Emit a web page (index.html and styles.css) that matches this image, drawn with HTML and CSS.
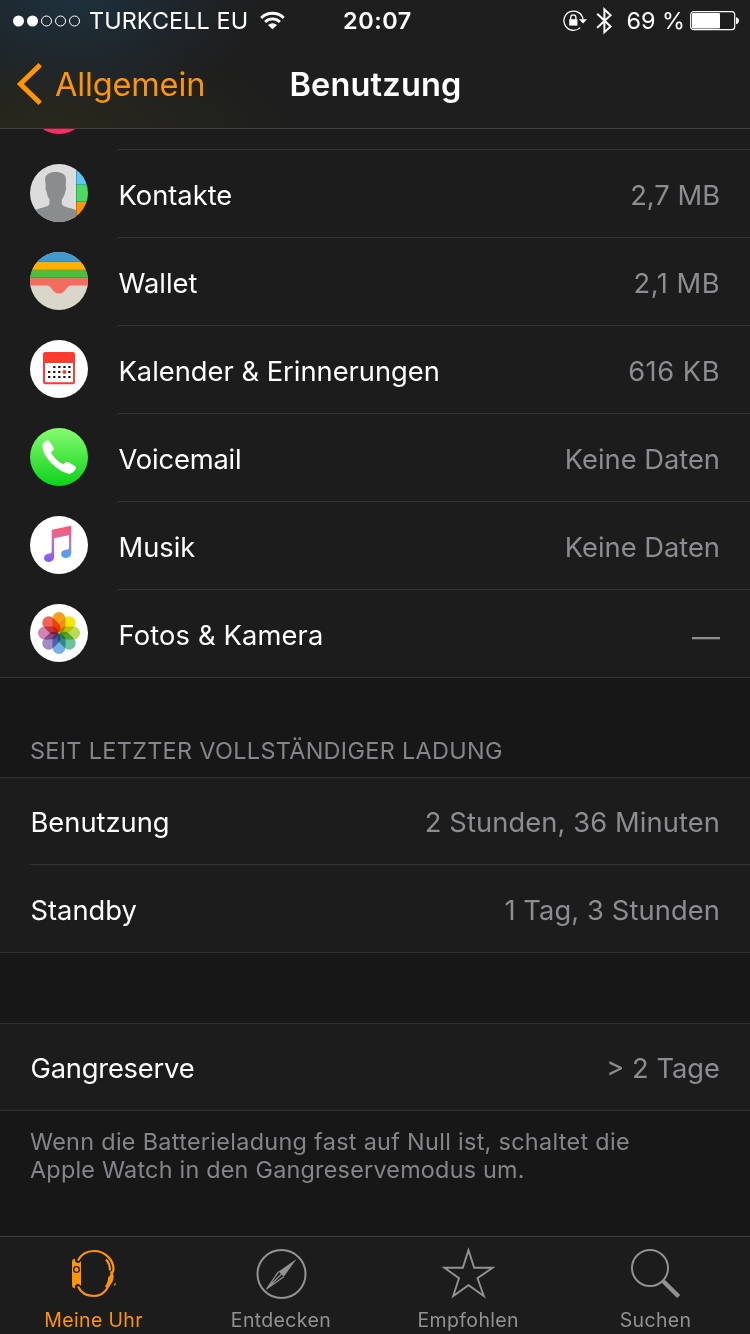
FILE: index.html
```
<!DOCTYPE html>
<html lang="de">
<head>
<meta charset="utf-8">
<title>Benutzung</title>
<link rel="stylesheet" href="styles.css">
</head>
<body>
<div class="screen">
  <header class="top">
    <div class="status">
      <div class="status-left">
        <svg class="dots" width="68" height="12" viewBox="0 0 68 12"><g fill="#fff"><circle cx="5.500" cy="6" r="5.500"/><circle cx="19.500" cy="6" r="5.500"/></g><g fill="none" stroke="#fff"><circle cx="33.500" cy="6" r="5"/><circle cx="47.500" cy="6" r="5"/><circle cx="61.500" cy="6" r="5"/></g></svg>
        <span class="carrier">TURKCELL EU</span>
        <svg class="wifi" width="25" height="19" viewBox="0 0 26 19"><g fill="none" stroke="#fff" stroke-width="3"><path d="M1.300 6.800a16.600 16.600 0 0 1 23.400 0"/><path d="M5.300 11a10.900 10.900 0 0 1 15.400 0"/></g><path d="M13 18.600l-4.700-4.300a6.700 6.700 0 0 1 9.400 0z" fill="#fff"/></svg>
      </div>
      <span class="clock">20:07</span>
      <div class="status-right">
        <svg class="lock" width="24" height="22" viewBox="0 0 24 22"><path d="M17.200 17.600A9.600 9.600 0 1 1 20 9.200" fill="none" stroke="#fff" stroke-width="1.300"/><path d="M16 9.200h8l-4 4.200z" fill="#fff"/><path d="M6.200 9.200h8.200v6.400H6.200z" fill="#fff"/><path d="M7.700 9.500V7.400a2.600 2.600 0 0 1 5.200 0v2.100" fill="none" stroke="#fff" stroke-width="1.300"/></svg>
        <svg class="bt" width="17" height="28" viewBox="0 0 17 28"><path d="M1.200 6.800L14.600 19.400 8.400 25.200V2.400l6.200 5.800L1.200 20.800" fill="none" stroke="#fff" stroke-width="2"/></svg>
        <span class="percent">69 %</span>
        <svg class="battery" width="50" height="20" viewBox="0 0 50 20"><rect x=".7" y=".7" width="44" height="18" rx="3" fill="none" stroke="#fff" stroke-width="1.200"/><rect x="2" y="2" width="28" height="15.400" rx="1.200" fill="#fff"/><path d="M46 6.300c4 .8 4 6 0 6.900z" fill="#fff"/></svg>
      </div>
    </div>
    <nav class="navbar">
      <a class="back"><svg width="28" height="44" viewBox="0 0 28 44"><path d="M24.200 2.800L4.400 22l19.800 19.200" fill="none" stroke="#ff9500" stroke-width="5"/></svg><span class="back-label">Allgemein</span></a>
      <h1 class="title">Benutzung</h1>
    </nav>
  </header>

  <main class="content">
    <section class="group apps">
      <div class="peek"><svg width="58" height="6" viewBox="0 52 58 6"><circle cx="29" cy="28" r="29" fill="#ff2968"/></svg></div>
      <div class="row">
        <svg class="icon" viewBox="0 0 58 58"><clipPath id="disc"><circle cx="29" cy="29" r="29"/></clipPath><g clip-path="url(#disc)"><path fill="#dcdcdc" d="M0 0h46v58H0z"/><path fill="#5ac8fa" d="M46 0h12v21H46z"/><path fill="#4cd964" d="M46 21h12v17H46z"/><path fill="#ff9500" d="M46 38h12v20H46z"/><path d="M46 20.500h12M46 37.500h12" stroke="#168a55" stroke-opacity=".5"/><path d="M46.500 0v58" stroke="#000" stroke-opacity=".22"/><path fill="#8a8c8e" d="M25.500 8c6 0 10.500 2 10.500 7.500l-.3 7.500c1 .2.600 2-.6 5-.3 3-1.600 5-3.300 7.500v3.500c0 3.500 5 4.200 9.200 5.300 2 .6 3.500 1.200 5 2V58H5V46.300c1.500-.8 3-1.500 5-2 4.200-1.100 9.500-1.800 9.500-5.300v-3.500c-1.500-2.500-2.500-4.500-2.800-7.500-1.400-3-1.800-4.800-.8-5l-.8-7.500C15 10.500 19.500 8 25.500 8z"/></g></svg>
        <span class="label">Kontakte</span><span class="value">2,7 MB</span>
      </div>
      <div class="row">
        <svg class="icon" viewBox="0 0 58 58"><g clip-path="url(#disc)"><path fill="#d9d6ca" d="M0 0h58v58H0z"/><path fill="#409bca" d="M0 0h58v10H0z"/><path fill="#ffb003" d="M0 10h58v8H0z"/><path fill="#4fbd3c" d="M0 18h58v8H0z"/><path fill="#f26d5f" d="M0 26h58v7.500H41c-5 0-5 8-12 8s-7-8-12-8H0z"/><path d="M0 9.500h58M0 17.500h58M0 25.500h58" stroke="#000" stroke-opacity=".12"/></g></svg>
        <span class="label">Wallet</span><span class="value wide">2,1 MB</span>
      </div>
      <div class="row">
        <svg class="icon" viewBox="0 0 58 58"><circle cx="29" cy="29" r="29" fill="#fff"/><rect x="13" y="12" width="32" height="32.300" rx="2.200" fill="#ff3b30"/><path fill="#fff" d="M15 23h28v19.200H15z"/><g fill="none" stroke="#111" stroke-width="2.200" stroke-dasharray="2.200 2.850"><path d="M23.200 27h19.500"/><path d="M18.100 32h22.500M18.100 37h22.500"/></g><circle cx="34.400" cy="32" r="2" fill="#ff3b30"/></svg>
        <span class="label">Kalender &amp; Erinnerungen</span><span class="value wide">616 KB</span>
      </div>
      <div class="row">
        <svg class="icon" viewBox="0 0 58 58"><linearGradient id="green" x1="0" y1="0" x2="0" y2="1"><stop stop-color="#87fc70"/><stop offset="1" stop-color="#0bd318"/></linearGradient><circle cx="29" cy="29" r="29" fill="url(#green)"/><path fill="#fff" d="M12.700 16.200c1-2 3-3.300 4.800-3.700 1.500-.2 2 .8 2.800 1.900l3.100 4.800c.8 1.400.3 2.500-.7 3.400-1.500 1.200-1.700 2-.9 3.300 2.700 4 6 7.200 10.200 9.700 1.200.7 2 .4 3-.8s2.200-1.500 3.600-.6l5.900 3.600c1.400.9 1.700 1.900 1.100 3.200-.8 2-2.700 3.900-5.100 4.600-4.600.8-11.900-3.600-17.700-9-6.200-6-11.700-15.200-10.100-20.400z"/></svg>
        <span class="label voicemail">Voicemail</span><span class="value">Keine Daten</span>
      </div>
      <div class="row">
        <svg class="icon" viewBox="0 0 58 58"><linearGradient id="note" gradientUnits="userSpaceOnUse" x1="29" y1="10" x2="29" y2="46"><stop stop-color="#fb5470"/><stop offset=".28" stop-color="#e4669b"/><stop offset=".6" stop-color="#a36be0"/><stop offset="1" stop-color="#8358fb"/></linearGradient><linearGradient id="noteR" gradientUnits="userSpaceOnUse" x1="37" y1="12" x2="37" y2="42"><stop stop-color="#f4577a"/><stop offset=".45" stop-color="#b07bd0"/><stop offset="1" stop-color="#3fa8fa"/></linearGradient><circle cx="29" cy="29" r="29" fill="#fff"/><path fill="url(#noteR)" d="M39 18h2.300v18.500c0 3.500-2.200 5.300-5.200 5.500-3.100.2-5-1.700-5-4 0-2.700 2-4 4.500-4.300 2.400-.3 3.400-.6 3.400-2z"/><path fill="url(#note)" d="M21.700 15.200c0-1.200.5-1.600 1.600-1.800l16.500-3.300c1-.2 1.500.2 1.500 1.200v7.500l-17.200 3.500v18.200c0 3.500-2.200 5.200-5.200 5.500-3.100.2-4.900-1.600-4.900-3.900 0-2.700 2-4 4.300-4.400 2.400-.4 3.400-.6 3.400-2.200z"/></svg>
        <span class="label">Musik</span><span class="value">Keine Daten</span>
      </div>
      <div class="row last">
        <svg class="icon" viewBox="0 0 58 58"><circle cx="29" cy="29" r="29" fill="#fff"/><g class="petals"><rect class="petal" x="22.500" y="8" width="13" height="20.500" rx="6.500" fill="#fba01e"/><rect class="petal" x="22.500" y="8" width="13" height="20.500" rx="6.500" fill="#f6e50c" transform="rotate(45 29 29)"/><rect class="petal" x="22.500" y="8" width="13" height="20.500" rx="6.500" fill="#b9da52" transform="rotate(90 29 29)"/><rect class="petal" x="22.500" y="8" width="13" height="20.500" rx="6.500" fill="#6bc49a" transform="rotate(135 29 29)"/><rect class="petal" x="22.500" y="8" width="13" height="20.500" rx="6.500" fill="#75b1e2" transform="rotate(180 29 29)"/><rect class="petal" x="22.500" y="8" width="13" height="20.500" rx="6.500" fill="#a18cc6" transform="rotate(225 29 29)"/><rect class="petal" x="22.500" y="8" width="13" height="20.500" rx="6.500" fill="#d285b4" transform="rotate(270 29 29)"/><rect class="petal" x="22.500" y="8" width="13" height="20.500" rx="6.500" fill="#f46257" transform="rotate(315 29 29)"/></g></svg>
        <span class="label fotos">Fotos &amp; Kamera</span><span class="value dash">—</span>
      </div>
    </section>

    <h2 class="heading">SEIT LETZTER VOLLSTÄNDIGER LADUNG</h2>
    <section class="group">
      <div class="row plain"><span class="label">Benutzung</span><span class="value hours">2 Stunden, 36 Minuten</span></div>
      <div class="row plain low last"><span class="label">Standby</span><span class="value hours">1 Tag, 3 Stunden</span></div>
    </section>

    <section class="group reserve">
      <div class="row plain last"><span class="label gang">Gangreserve</span><span class="value">&gt; 2 Tage</span></div>
    </section>
    <p class="note"><span>Wenn die Batterieladung fast auf Null ist, schaltet die</span><br><span class="second">Apple Watch in den Gangreservemodus um.</span></p>
  </main>

  <footer class="tabs">
    <a class="tab active">
      <svg width="54" height="54" viewBox="0 0 54 54"><g fill="none" stroke="#ff9500" stroke-width="2.200"><path d="M11 13.500C14.500 6.500 20.500 4 27 4c11 0 19.500 9 19.500 18 0 3-2.800 5-2.800 8C42 42 36 49 27 49c-7 0-13-3-16-9.500"/><path d="M39 12.500c3 3 4 6.500 4 11M43.700 24.500c2.500 2.500 2.200 6 .8 9.500-1 2.500-2.500 4-5 6.500"/><path d="M42.200 29.500c-.1 4.500-1.200 7.500-3.500 10.500" stroke-width="1.800"/></g><path d="M47.800 36l1.200.3-1 2.500-1.300-.3z" fill="#ff9500"/><path d="M8 11.500c-.5 2.500.5 4.500 3 4.500 1.500 0 2-1 3-2v25c-1-1-1.500-2-3-2-2.500 0-3.500 2-3 4.500-2-.3-3-1.500-3-3.500V15c0-2 1-3.200 3-3.500z" fill="#ff9500"/><circle cx="9.500" cy="22.500" r="2.800" fill="#ff9500" stroke="#1c1c1c" stroke-width="1.300"/></svg>
      <span>Meine Uhr</span>
    </a>
    <a class="tab">
      <svg width="54" height="54" viewBox="0 0 54 54"><circle cx="27.500" cy="27" r="24" fill="none" stroke="#929292" stroke-width="2"/><path d="M42.500 12L29.800 29.800l-5.200-5.200z" fill="#929292"/><path d="M24.600 24.600L12.500 42l17.300-12.200M12.500 42l14.800-14.700" fill="none" stroke="#929292" stroke-width="1.300"/></svg>
      <span>Entdecken</span>
    </a>
    <a class="tab">
      <svg width="54" height="54" viewBox="0 0 54 54"><path d="M27.500 3.200l5.700 17.600h18.400L36.500 31.200l6.300 17.800-15.300-10.800L12.200 49l5.800-17.800L3.400 20.800h18.400z" fill="none" stroke="#929292" stroke-width="1.900"/></svg>
      <span>Empfohlen</span>
    </a>
    <a class="tab">
      <svg width="54" height="54" viewBox="0 0 54 54"><circle cx="21" cy="21" r="18" fill="none" stroke="#929292" stroke-width="2"/><path d="M34 34L49.700 49.500" stroke="#929292" stroke-width="4.300"/></svg>
      <span>Suchen</span>
    </a>
  </footer>
</div>
</body>
</html>
```
FILE: styles.css
```
* { box-sizing: border-box; }
body { margin: 0; background: #171717; font-family: Inter, "Liberation Sans", sans-serif; color: #fff; }
.screen { width: 750px; height: 1334px; display: flex; flex-direction: column; overflow: hidden; }
svg { display: block; flex: none; }
span { white-space: nowrap; }

/* Status and navigation bars */
.top { height: 129px; flex: none; border-bottom: 1px solid #3f3f3f; background: radial-gradient(ellipse 190px 110px at 70px 0, #1e303c, transparent), radial-gradient(ellipse 260px 90px at 40px 129px, #29281c, transparent), #1e1e1e; }
.status { height: 41px; display: grid; grid-template-columns: 1fr auto 1fr; align-items: center; padding: 0 10px 0 13px; font-size: 23.4px; line-height: 30px; }
.status-left, .status-right { display: flex; align-items: center; }
.status-right { justify-content: flex-end; }
.carrier { margin-left: 8px; letter-spacing: .1px; }
.wifi { margin-left: 12px; }
.clock { font-weight: 600; letter-spacing: .6px; margin-left: 2px; }
.bt { margin-left: 9px; }
.percent { margin-left: 13px; }
.battery { margin-left: 5px; }
.navbar { height: 87px; display: grid; grid-template-columns: 1fr auto 1fr; align-items: center; padding: 0 15px 1px 16px; }
.back { display: flex; align-items: center; color: #ff9500; font-size: 32.5px; }
.back-label { margin-left: 11px; letter-spacing: -.15px; }
.title { margin: 0; font-size: 32.5px; font-weight: 600; letter-spacing: .2px; }

/* Grouped table */
.content { flex: 1; display: flex; flex-direction: column; }
.group { background: #1c1c1c; border-top: 1px solid #323232; border-bottom: 1px solid #323232; }
.apps { border-top: 0; }
.peek { height: 21px; padding-left: 30px; display: flex; }
.peek::after { content: ""; flex: 1; margin-left: 30px; border-bottom: 1px solid #323232; }
.row { height: 88px; display: flex; padding-left: 30px; font-size: 27.3px; }
.icon { width: 58px; height: 58px; margin: 14px 30px 0 0; }
.label, .value { height: 88px; line-height: 40px; padding-top: 26px; border-bottom: 1px solid #323232; }
.label { flex: 1; text-indent: .5px; }
.value { color: #8c8c91; padding-right: 30px; }
.wide { letter-spacing: .5px; }
.voicemail { letter-spacing: -.15px; }
.fotos { letter-spacing: .15px; }
.gang { letter-spacing: -.2px; }
.hours { letter-spacing: .1px; }
.dash { font-size: 28px; padding-top: 27px; }
.plain, .plain .label, .plain .value { height: 87px; }
.plain .label, .plain .value { padding-top: 25px; }
.low .label, .low .value { padding-top: 26px; }
.last, .last .label, .last .value { height: 87px; }
.last .label, .last .value { border-bottom: 0; }
.reserve .row, .reserve .label, .reserve .value { height: 86px; }
.petal { mix-blend-mode: multiply; }
.petals { isolation: isolate; }

.heading { height: 99px; margin: 0; padding: 58px 0 0 30px; font-size: 23.4px; line-height: 30px; font-weight: 400; letter-spacing: .34px; color: #85858a; }
.reserve { margin-top: 70px; }
.note { margin: 17px 0 0 30px; font-size: 23.4px; line-height: 28px; letter-spacing: .31px; color: #85858a; }
.second { letter-spacing: .22px; }

/* Tab bar */
.tabs { height: 98px; flex: none; display: grid; grid-template-columns: repeat(4, 187.3px); background: #1c1c1c; border-top: 1px solid #3f3f3f; color: #929292; font-size: 19.5px; line-height: 24px; letter-spacing: .35px; }
.tab { display: flex; flex-direction: column; align-items: center; padding-top: 10px; gap: 7px; }
.active { color: #ff9500; }
```
